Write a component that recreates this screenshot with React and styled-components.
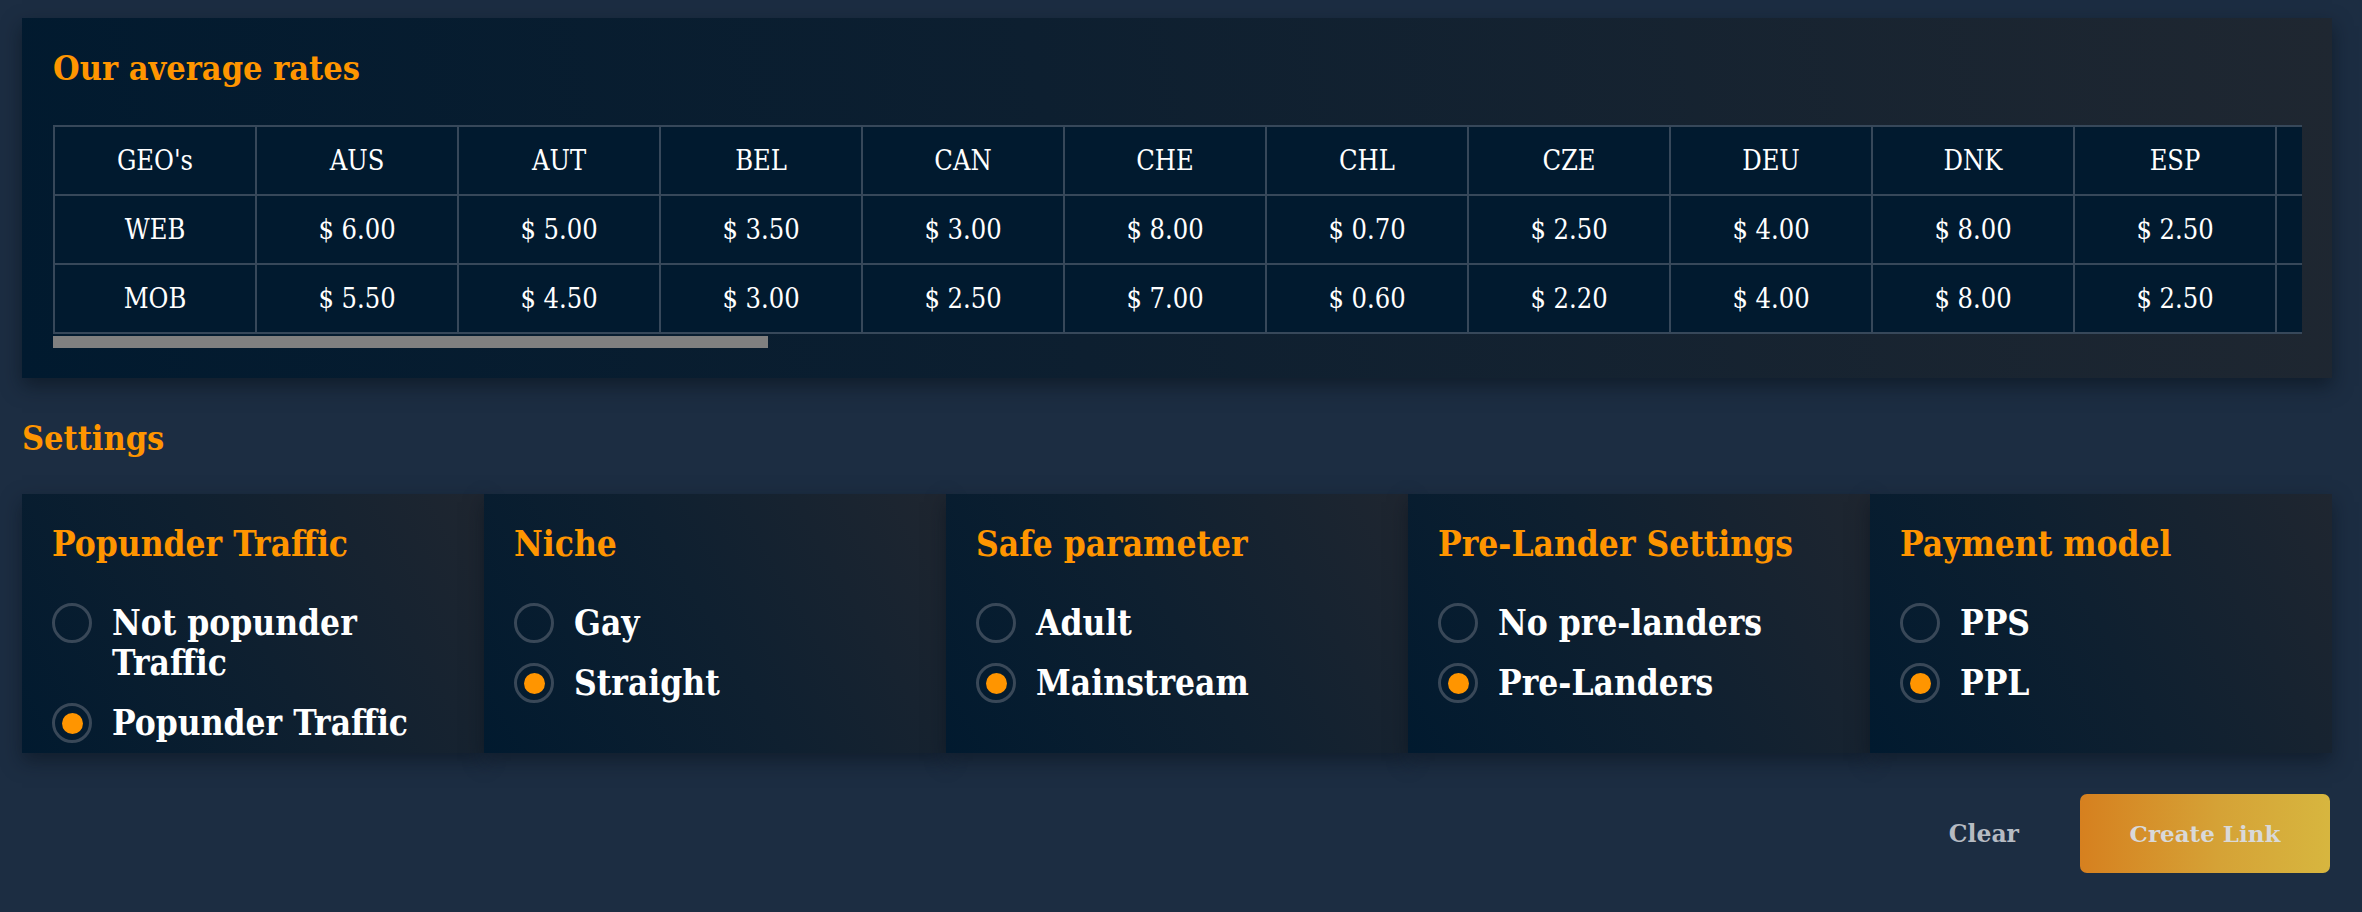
import React from 'react';
import styled, { createGlobalStyle } from 'styled-components';

const GlobalStyle = createGlobalStyle`
  body {
    margin: 0;
    background: #1c2d42;
    font-family: "DejaVu Serif", "Liberation Serif", serif;
    font-stretch: condensed;
  }
`;

const Page = styled.div`
  padding: 18px 30px 40px 22px;
`;

const RatesCard = styled.section`
  background: linear-gradient(80deg, #011a2f 0%, #0d1f30 45%, #1f2731 100%);
  box-shadow: 0 8px 18px rgba(8, 16, 26, 0.55);
  padding: 30px 30px 30px 31px;
`;

const Heading = styled.h2`
  color: #ff9500;
  font-size: 34px;
  font-weight: 700;
  line-height: 40px;
  margin: 0;
`;

const RatesTitle = styled(Heading)`
  margin-bottom: 37px;
`;

const SettingsTitle = styled(Heading)`
  margin: 40px 0 36px;
`;

const TableClip = styled.div`
  overflow: hidden;
`;

const Table = styled.table`
  border-collapse: collapse;
  table-layout: fixed;
`;

const Cell = styled.td`
  background: #011a2f;
  border: 2px solid #37485a;
  color: #fff;
  font-size: 27px;
  height: 67px;
  min-width: 200px;
  padding: 0;
  text-align: center;
  width: 200px;
`;

const ScrollTrack = styled.div`
  height: 12px;
  margin-top: 2px;
`;

const ScrollThumb = styled.div`
  background: #808080;
  height: 100%;
`;

const CardsRow = styled.div`
  display: grid;
  grid-template-columns: repeat(5, 1fr);
`;

const SettingCard = styled.div`
  background: linear-gradient(60deg, #011a2f 0%, #0f2030 50%, #1f2630 100%);
  box-shadow: 0 8px 18px rgba(8, 16, 26, 0.5);
  padding: 30px 30px 10px;
`;

const CardTitle = styled.h3`
  color: #ff9500;
  font-size: 35px;
  font-weight: 700;
  line-height: 40px;
  margin: 0 0 39px;
  white-space: nowrap;
`;

const Option = styled.label`
  align-items: flex-start;
  color: #fff;
  display: flex;
  font-size: 35px;
  font-weight: 700;
  gap: 20px;
  line-height: 40px;
  margin-bottom: 20px;

  &:last-child {
    margin-bottom: 0;
  }
`;

const Radio = styled.span`
  border: 3px solid #394858;
  border-radius: 50%;
  box-sizing: border-box;
  flex: 0 0 40px;
  height: 40px;
  position: relative;

  &::after {
    background: #ff9500;
    border-radius: 50%;
    content: '';
    display: ${(p) => (p.$checked ? 'block' : 'none')};
    height: 21px;
    left: 6.5px;
    position: absolute;
    top: 6.5px;
    width: 21px;
  }
`;

const Actions = styled.div`
  align-items: center;
  display: flex;
  gap: 61px;
  justify-content: flex-end;
  margin-top: 41px;
  padding-right: 2px;
`;

const ClearButton = styled.button`
  background: none;
  border: 0;
  color: #b6bbc2;
  font-family: inherit;
  font-size: 23.5px;
  font-weight: 700;
  padding: 0;
`;

const CreateButton = styled.button`
  background: linear-gradient(90deg, #d6801f 0%, #d5a236 55%, #d7b63f 100%);
  border: 0;
  border-radius: 7px;
  color: #d9d9d9;
  font-family: inherit;
  font-size: 23px;
  font-weight: 700;
  height: 79px;
  width: 250px;
`;

const rates = [
  ['AUS', 6, 5.5], ['AUT', 5, 4.5], ['BEL', 3.5, 3], ['CAN', 3, 2.5],
  ['CHE', 8, 7], ['CHL', 0.7, 0.6], ['CZE', 2.5, 2.2], ['DEU', 4, 4],
  ['DNK', 8, 8], ['ESP', 2.5, 2.5], ['FIN', 4, 3.5]
];
const TOTAL_COLUMNS = 35;
const VISIBLE_COLUMNS = 11.12;

const money = (v) => `$ ${v.toFixed(2)}`;

const settings = [
  { title: 'Popunder Traffic', options: ['Not popunder Traffic', 'Popunder Traffic'], checked: 1 },
  { title: 'Niche', options: ['Gay', 'Straight'], checked: 1 },
  { title: 'Safe parameter', options: ['Adult', 'Mainstream'], checked: 1 },
  { title: 'Pre-Lander Settings', options: ['No pre-landers', 'Pre-Landers'], checked: 1 },
  { title: 'Payment model', options: ['PPS', 'PPL'], checked: 1 }
];

export default function App() {
  return (
    <Page>
      <GlobalStyle />
      <RatesCard>
        <RatesTitle>Our average rates</RatesTitle>
        <TableClip>
          <Table>
            <tbody>
              <tr>
                <Cell>GEO's</Cell>
                {rates.map(([g]) => <Cell key={g}>{g}</Cell>)}
              </tr>
              <tr>
                <Cell>WEB</Cell>
                {rates.map(([g, w]) => <Cell key={g}>{money(w)}</Cell>)}
              </tr>
              <tr>
                <Cell>MOB</Cell>
                {rates.map(([g, , m]) => <Cell key={g}>{money(m)}</Cell>)}
              </tr>
            </tbody>
          </Table>
        </TableClip>
        <ScrollTrack>
          <ScrollThumb style={{ width: `${(VISIBLE_COLUMNS / TOTAL_COLUMNS) * 100}%` }} />
        </ScrollTrack>
      </RatesCard>

      <SettingsTitle>Settings</SettingsTitle>
      <CardsRow>
        {settings.map((s) => (
          <SettingCard key={s.title}>
            <CardTitle>{s.title}</CardTitle>
            {s.options.map((o, i) => (
              <Option key={o}>
                <Radio $checked={i === s.checked} />
                <span>{o}</span>
              </Option>
            ))}
          </SettingCard>
        ))}
      </CardsRow>

      <Actions>
        <ClearButton>Clear</ClearButton>
        <CreateButton>Create Link</CreateButton>
      </Actions>
    </Page>
  );
}
